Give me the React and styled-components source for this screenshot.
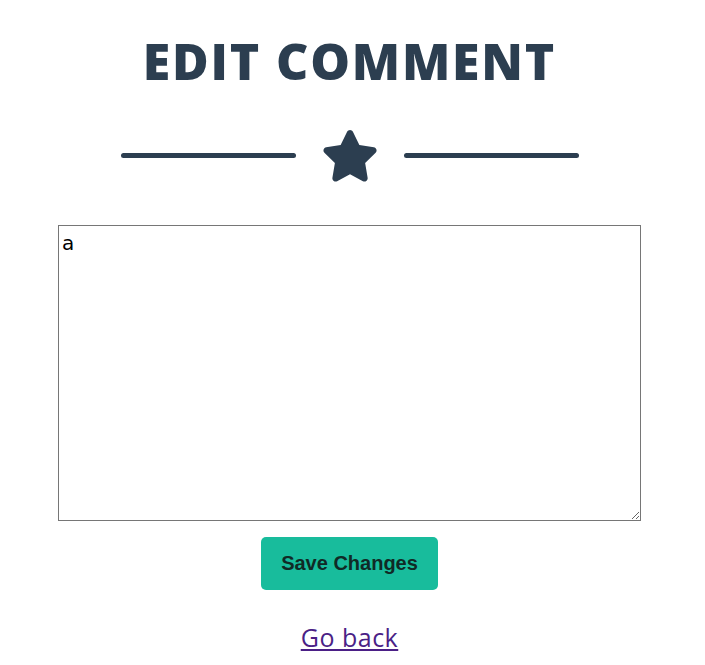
import React from 'react';
import styled, { createGlobalStyle } from 'styled-components';
import { FaStar } from 'react-icons/fa6';

const GlobalStyle = createGlobalStyle`
  html, body {
    margin: 0;
    padding: 0;
    background: #fff;
  }
`;

const Page = styled.div`
  width: 699px;
  display: flex;
  flex-direction: column;
  align-items: center;
  padding-top: 30px;
`;

const Title = styled.h2`
  margin: 0;
  font-family: "Open Sans", sans-serif;
  font-weight: 800;
  font-size: 50px;
  line-height: 62px;
  letter-spacing: 1.8px;
  text-transform: uppercase;
  color: #2c3e50;
`;

const Divider = styled.div`
  display: flex;
  align-items: center;
  margin-top: 38px;
  color: #2c3e50;

  svg {
    height: 51.5px;
    width: 58px;
    margin: 0 25px;
  }
`;

const Line = styled.div`
  width: 175px;
  height: 5px;
  border-radius: 3px;
  background: #2c3e50;
`;

const Editor = styled.textarea`
  box-sizing: border-box;
  margin-top: 43px;
  width: 583px;
  height: 296px;
  padding: 5px 3px 2px;
  border: 1px solid #767676;
  font-family: "DejaVu Sans", sans-serif;
  font-size: 20px;
  color: #000;
  resize: both;
  outline: none;
`;

const SaveButton = styled.button`
  margin-top: 16px;
  width: 177px;
  height: 53px;
  border: none;
  border-radius: 5px;
  background: #18bc9c;
  color: #102a26;
  font-family: "Liberation Sans", Arial, sans-serif;
  font-weight: 700;
  font-size: 20px;
  cursor: pointer;
`;

const BackLink = styled.a`
  margin-top: 30px;
  font-family: "Open Sans", sans-serif;
  font-size: 25px;
  letter-spacing: 0.5px;
  color: #4b1f86;
  text-decoration: underline;
`;

export default function App() {
  return (
    <>
      <GlobalStyle />
      <Page>
        <Title>Edit Comment</Title>
        <Divider>
          <Line />
          <FaStar />
          <Line />
        </Divider>
        <Editor defaultValue="a" />
        <SaveButton>Save Changes</SaveButton>
        <BackLink href="#">Go back</BackLink>
      </Page>
    </>
  );
}
